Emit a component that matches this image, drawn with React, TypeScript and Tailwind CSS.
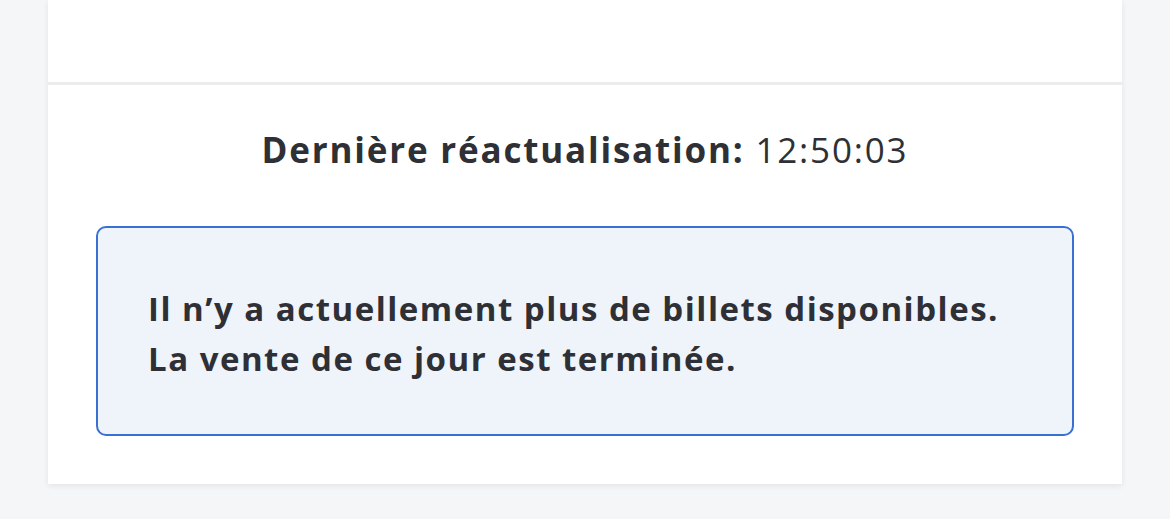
export default function App() {
  return (
    <div
      className="min-h-[519px] w-full bg-[#f5f6f8] px-[48px]"
      style={{ fontFamily: "'Open Sans', Lato, sans-serif" }}
    >
      <div className="w-full bg-white shadow-[0_2px_6px_rgba(0,0,0,0.08)]">
        <div className="h-[85px] border-b-[3px] border-[#ececec]" />
        <div className="flex flex-col items-center px-[48px] pt-[41px] pb-[48px]">
          <p className="text-[35px] leading-[48px] tracking-[1.8px] text-[#2e3035]">
            <span className="font-bold">Dernière réactualisation:</span>{" "}
            <span>12:50:03</span>
          </p>
          <div className="mt-[52px] w-full rounded-[10px] border-2 border-[#3a70d2] bg-[#eff3fa] px-[50px] pt-[56px] pb-[50px]">
            <p className="text-[33px] font-bold leading-[50px] tracking-[1.5px] text-[#2e3035]">
              Il n’y a actuellement plus de billets disponibles.
              <br />
              La vente de ce jour est terminée.
            </p>
          </div>
        </div>
      </div>
    </div>
  );
}
